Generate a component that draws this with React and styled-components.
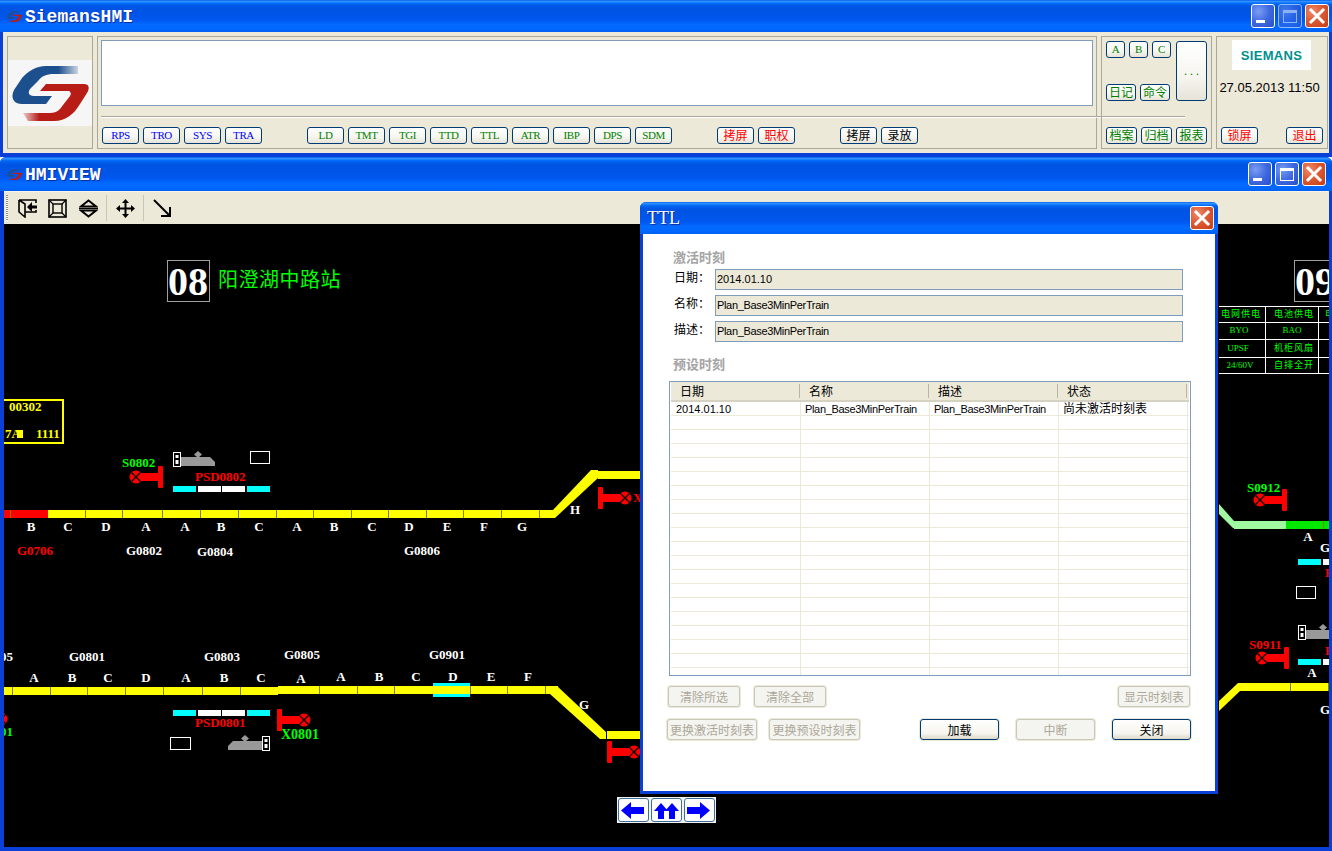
import React from 'react';
import styled, { createGlobalStyle } from 'styled-components';

const MONO = '"Liberation Mono", "Noto Sans CJK SC", monospace';
const SERIF = '"Liberation Serif", "Noto Sans CJK SC", serif';
const SANS = '"Liberation Sans", "Noto Sans CJK SC", sans-serif';
const CJK = '"Noto Sans CJK SC", "Liberation Sans", sans-serif';
const TONES = { blue: '#0000ff', green: '#008000', red: '#ff0000', black: '#000000' };
const TITLE_GRADIENT = `linear-gradient(180deg, #0058ee 0%, #3593ff 4%, #288eff 6%, #127dff 8%, #036ffc 10%,
  #0262ee 14%, #0057e5 20%, #0054e3 24%, #0055eb 56%, #005bf5 66%, #026afe 76%, #0068ff 90%, #0060f2 100%)`;

const GlobalStyle = createGlobalStyle`
  html, body {
    margin: 0;
    width: 1332px;
    height: 851px;
    overflow: hidden;
    background: #ffffff;
  }
`;

const Page = styled.div`
  display: flex;
  flex-direction: column;
  width: 1332px;
  height: 851px;
`;

const Window = styled.section`
  position: relative;
  display: flex;
  flex-direction: column;
  background: #0a3fd8;
  height: ${({ $height }) => $height}px;
  border-radius: ${({ $round }) => ($round ? '6px 6px 0 0' : '0')};
`;

const TitleBar = styled.header`
  display: flex;
  align-items: center;
  flex: none;
  height: ${({ $height }) => $height}px;
  padding: 0 ${({ $right }) => $right}px 0 6px;
  background: ${TITLE_GRADIENT};
  border-radius: inherit;
`;

const TitleText = styled.h1`
  flex: 1;
  margin: 0 0 0 2px;
  padding-top: 2px;
  color: #ffffff;
  font: bold 18px ${MONO};
  text-shadow: 1px 1px 0 #0b2f9e;
`;

const CaptionGroup = styled.div`
  display: flex;
  gap: 3px;
`;

const CaptionButton = styled.button`
  display: flex;
  align-items: center;
  justify-content: center;
  width: 24px;
  height: 24px;
  padding: 0;
  border: 1px solid #ffffff;
  border-radius: 3px;
  opacity: ${({ $disabled }) => ($disabled ? 0.55 : 1)};
  background: ${({ $close }) =>
    $close
      ? 'radial-gradient(circle at 30% 30%, #ee8a68 0%, #dc5a34 45%, #c63c12 100%)'
      : 'radial-gradient(circle at 30% 30%, #7a9df2 0%, #3f69e0 50%, #2a4fc8 100%)'};
`;

const ToolPanel = styled.div`
  display: flex;
  gap: 4px;
  height: 121px;
  margin: 0 3px;
  padding: 4px;
  box-sizing: border-box;
  background: #ece9d8;
`;

const GroupBox = styled.div`
  flex: none;
  box-sizing: border-box;
  width: ${({ $width }) => $width}px;
  height: 113px;
  border: 1px solid #aca899;
`;

const LogoGroup = styled(GroupBox)`
  display: flex;
  align-items: center;
`;

const LogoPlate = styled.div`
  display: flex;
  align-items: center;
  justify-content: center;
  width: 100%;
  height: 66px;
  background: #f6f6f6;
`;

const MainGroup = styled(GroupBox)`
  padding: 3px;
`;

const MessageBox = styled.div`
  height: 66px;
  box-sizing: border-box;
  border: 1px solid #7f9db9;
  background: #ffffff;
`;

const Separator = styled.div`
  width: 1084px;
  height: 1px;
  margin: 10px 0 10px;
  background: #aca899;
  box-shadow: 0 1px 0 #ffffff;
`;

const ButtonRow = styled.div`
  display: flex;
  margin-left: 1px;
  gap: 45px;
`;

const ButtonCluster = styled.div`
  display: flex;
  gap: 4px;
`;

const SmallButton = styled.button`
  flex: none;
  box-sizing: border-box;
  width: ${({ $width }) => $width || 37}px;
  height: ${({ $height }) => $height || 17}px;
  padding: 0;
  border: 1px solid #003c74;
  border-radius: 3px;
  background: linear-gradient(180deg, #ffffff 0%, #f6f5ef 60%, #e6e4d8 100%);
  color: ${({ $tone }) => TONES[$tone]};
  font: ${({ $latin }) => ($latin ? '11px' : '12px')}/1 ${SERIF};
  letter-spacing: ${({ $latin }) => ($latin ? '-0.4px' : '0')};
`;

const StationGroup = styled(GroupBox)`
  display: flex;
  flex-direction: column;
  padding: 4px 4px 0;
`;

const StationTop = styled.div`
  display: flex;
  justify-content: space-between;
  height: 60px;
  margin-bottom: 26px;
`;

const StationLeft = styled.div`
  display: flex;
  flex-direction: column;
  justify-content: space-between;
`;

const StationRow = styled.div`
  display: flex;
  gap: ${({ $gap }) => $gap}px;
`;

const StationBottom = styled.div`
  display: flex;
  justify-content: space-between;
`;

const ClockGroup = styled(GroupBox)`
  display: flex;
  flex-direction: column;
  align-items: center;
  padding-top: 3px;
`;

const BrandPlate = styled.div`
  display: flex;
  align-items: center;
  justify-content: center;
  width: 79px;
  height: 30px;
  margin-right: 1px;
  background: #ffffff;
  color: #008f8f;
  font: bold 13px/1 ${SANS};
  letter-spacing: 0.3px;
`;

const ClockText = styled.div`
  margin: 10px 5px 0 0;
  color: #000000;
  font: 13px/16px ${SANS};
  white-space: nowrap;
`;

const ClockButtons = styled.div`
  display: flex;
  justify-content: space-between;
  align-self: stretch;
  margin: 31px 4px 0;
`;

const Toolbar = styled.div`
  display: flex;
  align-items: center;
  flex: none;
  height: 33px;
  margin: 0 3px 0 4px;
  padding-left: 2px;
  background: #ece9d8;
  border-top: 1px solid #f6f4ea;
  box-sizing: border-box;
`;

const Grip = styled.div`
  width: 2px;
  height: 26px;
  margin-right: 10px;
  background: repeating-linear-gradient(180deg, #8f8c7c 0 1px, #ffffff 1px 2px);
`;

const ToolIcon = styled.svg`
  flex: none;
  width: 19px;
  height: 19px;
  margin-right: ${({ $gap }) => $gap}px;
`;

const ToolDivider = styled.div`
  flex: none;
  width: 1px;
  height: 26px;
  margin-right: ${({ $gap }) => $gap}px;
  background: #c9c6b4;
`;

const Canvas = styled.main`
  position: relative;
  flex: none;
  width: 1325px;
  height: 623px;
  margin: 0 3px 0 4px;
  background: #000000;
`;

const Schematic = styled.svg`
  display: block;
  width: 1325px;
  height: 623px;
`;

const MapText = styled.text`
  fill: ${({ $fill }) => $fill || '#ffffff'};
  font: bold ${({ $size }) => $size || 13}px ${SERIF};
`;

const StationNumber = styled.text`
  fill: #ffffff;
  font: bold 40px ${SERIF};
`;

const StationName = styled.text`
  fill: #00ff00;
  font: 20px ${CJK};
  letter-spacing: 0.5px;
`;

const StatusText = styled.text`
  fill: #00ff00;
  font: 9px ${SERIF};
  letter-spacing: ${({ $latin }) => ($latin ? '0' : '1px')};
  text-anchor: middle;
`;

const NavBar = styled.nav`
  position: absolute;
  left: 613px;
  top: 573px;
  display: flex;
  gap: 2px;
  padding: 1px;
  background: #f4f4ee;
`;

const NavButton = styled.button`
  display: flex;
  align-items: center;
  justify-content: center;
  width: 31px;
  height: 24px;
  padding: 0;
  border: 1px solid #3b6d9c;
  border-radius: 3px;
  background: #ffffff;
`;

const Dialog = styled.section`
  position: absolute;
  left: 640px;
  top: 45px;
  display: flex;
  flex-direction: column;
  box-sizing: border-box;
  width: 578px;
  height: 592px;
  border: 3px solid #0a3fd8;
  border-top: none;
  border-radius: 6px 6px 0 0;
  background: #ffffff;
`;

const DialogTitle = styled.header`
  display: flex;
  align-items: center;
  justify-content: space-between;
  flex: none;
  height: 32px;
  margin: 0 -3px;
  padding: 0 4px 0 7px;
  background: ${TITLE_GRADIENT};
  border-radius: 6px 6px 0 0;
  color: #ffffff;
  font: 18px "Liberation Serif", serif;
  text-shadow: 1px 1px 0 #0b2f9e;
`;

const DialogBody = styled.div`
  padding: 16px 24px 0;
`;

const SectionLabel = styled.h2`
  height: 14px;
  margin: ${({ $top }) => $top}px 0 0 6px;
  color: #a4a4a4;
  font: bold 13px/13px ${CJK};
`;

const FieldList = styled.div`
  display: flex;
  flex-direction: column;
  gap: 5px;
  margin: 5px 8px 0 7px;
`;

const FieldRow = styled.div`
  display: flex;
  align-items: center;
`;

const FieldLabel = styled.label`
  width: 41px;
  color: #000000;
  font: 12px ${CJK};
  position: relative;
  top: -3px;
`;

const FieldValue = styled.div`
  flex: 1;
  box-sizing: border-box;
  height: 21px;
  padding-left: 1px;
  border: 1px solid #7f9db9;
  background: #ece9d8;
  color: #000000;
  font: 11px/19px ${SANS};
  letter-spacing: ${({ $tight }) => ($tight ? '-0.33px' : '0')};
`;

const ListTable = styled.div`
  box-sizing: border-box;
  height: 295px;
  margin: 10px 0 0 2px;
  padding: 0 1px;
  overflow: hidden;
  border: 1px solid #7f9db9;
`;

const ListRow = styled.div`
  display: grid;
  grid-template-columns: repeat(4, 129px);
  height: ${({ $header }) => ($header ? 18 : 13)}px;
  padding-left: ${({ $header }) => ($header ? 0 : 1)}px;
  background: ${({ $header }) => ($header ? '#ece9d8' : '#ffffff')};
  border-bottom: ${({ $header }) => ($header ? '2px solid #d6d2c2' : '1px solid #ece9d8')};
`;

const HeadCell = styled.div`
  padding-left: 9px;
  margin: 2px 0;
  border-right: 1px solid #b9b6a4;
  color: #000000;
  font: 12px/14px ${CJK};
`;

const BodyCell = styled.div`
  padding-left: 4px;
  border-right: 1px solid #ece9d8;
  color: #000000;
  font: ${({ $size }) => $size || 11}px/14px ${SANS};
  letter-spacing: ${({ $tight }) => ($tight ? '-0.33px' : '0')};
  white-space: nowrap;
  overflow: hidden;
`;

const ActionRow = styled.div`
  display: flex;
  align-items: center;
  margin-top: ${({ $top }) => $top}px;
`;

const ActionButton = styled.button`
  flex: none;
  box-sizing: border-box;
  width: ${({ $width }) => $width}px;
  height: 21px;
  margin-left: ${({ $left }) => $left || 0}px;
  padding: 0;
  border: 1px solid ${({ disabled }) => (disabled ? '#c9c7ba' : '#003c74')};
  border-radius: 3px;
  box-shadow: 0 0 0 1px #ece9d8;
  background: ${({ disabled }) =>
    disabled ? '#f4f4f0' : 'linear-gradient(180deg, #ffffff 0%, #f6f5ef 70%, #dcd8c8 100%)'};
  color: ${({ disabled }) => (disabled ? '#aca899' : '#000000')};
  font: 12px ${CJK};
  white-space: nowrap;
`;

function Logo({ width, height }) {
  return (
    <svg width={width} height={height} viewBox="0 0 84 66">
      <defs>
        <linearGradient id="logoBlue" x1="0" x2="1" y1="0" y2="0">
          <stop offset="0.7" stopColor="#1c4f8d" />
          <stop offset="1" stopColor="#1c4f8d" stopOpacity="0.2" />
        </linearGradient>
        <linearGradient id="logoRed" x1="0" x2="1" y1="0" y2="0">
          <stop offset="0" stopColor="#b71c18" stopOpacity="0.2" />
          <stop offset="0.25" stopColor="#b71c18" />
        </linearGradient>
        <filter id="logoSoft">
          <feGaussianBlur stdDeviation="0.5" />
        </filter>
      </defs>
      <g filter="url(#logoSoft)">
        <path
          d="M70 6 H38 C28 6 20 11 14 18 L6 30 C2 38 6 44 14 44 H38 L44 36 H26 C20 36 20 32 22 29 L30 21 C34 16 38 14 46 14 H70 Z"
          fill="url(#logoBlue)"
        />
        <path
          d="M38 24 H76 C81 24 82 28 79 33 L72 44 C66 54 58 61 46 61 H20 L15 53 H42 C50 53 52 49 55 45 L62 36 C64 33 62 31 60 31 H32 Z"
          fill="url(#logoRed)"
        />
      </g>
    </svg>
  );
}

function CaptionGlyph({ kind }) {
  if (kind === 'min') {
    return (
      <svg width="22" height="22" viewBox="0 0 22 22">
        <rect x="4" y="15" width="9" height="3" fill="#ffffff" />
      </svg>
    );
  }
  if (kind === 'max') {
    return (
      <svg width="22" height="22" viewBox="0 0 22 22">
        <rect x="4.5" y="5.5" width="13" height="12" fill="none" stroke="#ffffff" />
        <rect x="4" y="5" width="14" height="3" fill="#ffffff" />
      </svg>
    );
  }
  return (
    <svg width="22" height="22" viewBox="0 0 22 22">
      <path d="M5 5 L17 17 M17 5 L5 17" stroke="#ffffff" strokeWidth="3" strokeLinecap="square" />
    </svg>
  );
}

function Captions({ maxDisabled }) {
  return (
    <CaptionGroup>
      <CaptionButton>
        <CaptionGlyph kind="min" />
      </CaptionButton>
      <CaptionButton $disabled={maxDisabled}>
        <CaptionGlyph kind="max" />
      </CaptionButton>
      <CaptionButton $close>
        <CaptionGlyph kind="close" />
      </CaptionButton>
    </CaptionGroup>
  );
}

const BUTTON_CLUSTERS = [
  { tone: 'blue', labels: ['RPS', 'TRO', 'SYS', 'TRA'] },
  { tone: 'green', labels: ['LD', 'TMT', 'TGI', 'TTD', 'TTL', 'ATR', 'IBP', 'DPS', 'SDM'] },
  { tone: 'red', labels: ['拷屏', '职权'] },
  { tone: 'black', labels: ['拷屏', '录放'] },
];

function PanelButton({ label, tone, ...rest }) {
  return (
    <SmallButton $tone={tone} $latin={/^[A-Z]+$/.test(label)} {...rest}>
      {label}
    </SmallButton>
  );
}

function TopWindow() {
  return (
    <Window $height={157}>
      <TitleBar $height={32} $right={3}>
        <Logo width={17} height={13} />
        <TitleText>SiemansHMI</TitleText>
        <Captions maxDisabled />
      </TitleBar>
      <ToolPanel>
        <LogoGroup $width={86}>
          <LogoPlate>
            <Logo width={84} height={66} />
          </LogoPlate>
        </LogoGroup>
        <MainGroup $width={1000}>
          <MessageBox />
          <Separator />
          <ButtonRow>
            {BUTTON_CLUSTERS.map(cluster => (
              <ButtonCluster key={cluster.tone}>
                {cluster.labels.map(label => (
                  <PanelButton key={label} label={label} tone={cluster.tone} />
                ))}
              </ButtonCluster>
            ))}
          </ButtonRow>
        </MainGroup>
        <StationGroup $width={111}>
          <StationTop>
            <StationLeft>
              <StationRow $gap={4}>
                {['A', 'B', 'C'].map(label => (
                  <PanelButton key={label} label={label} tone="green" $width={19} />
                ))}
              </StationRow>
              <StationRow $gap={4}>
                <PanelButton label="日记" tone="green" $width={30} />
                <PanelButton label="命令" tone="green" $width={30} />
              </StationRow>
            </StationLeft>
            <PanelButton label=". . ." tone="green" $width={31} $height={60} />
          </StationTop>
          <StationBottom>
            {['档案', '归档', '报表'].map(label => (
              <PanelButton key={label} label={label} tone="green" $width={31} />
            ))}
          </StationBottom>
        </StationGroup>
        <ClockGroup $width={112}>
          <BrandPlate>SIEMANS</BrandPlate>
          <ClockText>27.05.2013 11:50</ClockText>
          <ClockButtons>
            <PanelButton label="锁屏" tone="red" />
            <PanelButton label="退出" tone="red" />
          </ClockButtons>
        </ClockGroup>
      </ToolPanel>
    </Window>
  );
}

function ViewToolbar() {
  return (
    <Toolbar>
      <Grip />
      <ToolIcon viewBox="0 0 19 19" $gap={11}>
        <path d="M1 1H18V4M18 11V13H7M1 1V13L7 18V5L1 1" fill="none" stroke="#000" strokeWidth="1.6" />
        <path d="M19 6.5H14V3L9 8L14 13V9.5H19Z" fill="#000" />
      </ToolIcon>
      <ToolIcon viewBox="0 0 19 19" $gap={12}>
        <rect x="1" y="1" width="17" height="17" fill="none" stroke="#000" strokeWidth="1.6" />
        <rect x="5" y="5" width="9" height="9" fill="none" stroke="#000" strokeWidth="1.4" />
        <path d="M1 1L5 5M18 1L14 5M1 18L5 14M18 18L14 14" stroke="#000" strokeWidth="1.2" />
      </ToolIcon>
      <ToolIcon viewBox="0 0 19 19" $gap={8}>
        <path d="M9.5 1.5L17 7.5H2Z M9.5 17.5L2 11.5H17Z" fill="none" stroke="#000" strokeWidth="2" />
        <path d="M0 9.5H19" stroke="#000" strokeWidth="1.2" />
      </ToolIcon>
      <ToolDivider $gap={9} />
      <ToolIcon viewBox="0 0 19 19" $gap={8}>
        <path d="M9.5 3V16M3 9.5H16" stroke="#000" strokeWidth="2" />
        <path d="M9.5 0L13 4H6ZM9.5 19L6 15H13ZM0 9.5L4 6V13ZM19 9.5L15 13V6Z" fill="#000" />
      </ToolIcon>
      <ToolDivider $gap={9} />
      <ToolIcon viewBox="0 0 19 19" $gap={0}>
        <path d="M1 1L17 17M17 8V17H8" fill="none" stroke="#000" strokeWidth="2" />
      </ToolIcon>
    </Toolbar>
  );
}

const TRACKS = [
  { x: 4, y: 510, w: 44, fill: '#ff0000', cuts: [10] },
  { x: 48, y: 510, w: 505, fill: '#ffff00', cuts: [85, 122, 162, 200, 238, 276, 313, 351, 388, 426, 463, 501, 539] },
  { x: 598, y: 471, w: 44, fill: '#ffff00', cuts: [] },
  { x: 4, y: 687, w: 274, fill: '#ffff00', cuts: [12, 50, 87, 125, 163, 202, 240] },
  { x: 278, y: 686, w: 280, fill: '#ffff00', cuts: [319, 357, 394, 433, 470, 507, 545] },
  { x: 607, y: 731, w: 35, fill: '#ffff00', cuts: [] },
  { x: 1234, y: 521, w: 52, fill: '#a0f8a0', cuts: [] },
  { x: 1286, y: 521, w: 43, fill: '#00e800', cuts: [1323] },
  { x: 1238, y: 683, w: 91, fill: '#ffff00', cuts: [1290, 1328] },
];

const DIAGONALS = [
  { points: '553,510 591,470 598,470 598,478 555,518 546,518', fill: '#ffff00' },
  { points: '557,686 606,732 606,739 600,739 550,694 557,694', fill: '#ffff00' },
  { points: '1219,504 1234,521 1240,521 1240,528 1233,528 1219,514', fill: '#a0f8a0' },
  { points: '1219,701 1238,683 1240,691 1219,711', fill: '#ffff00' },
];

const LETTERS = [
  ['B', 31, 527], ['C', 68, 527], ['D', 106, 527], ['A', 146, 527], ['A', 185, 527], ['B', 221, 527], ['C', 259, 527],
  ['A', 297, 527], ['B', 334, 527], ['C', 372, 527], ['D', 409, 527], ['E', 447, 527], ['F', 484, 527], ['G', 522, 527],
  ['H', 575, 510], ['A', 34, 678], ['B', 72, 678], ['C', 108, 678], ['D', 146, 678], ['A', 186, 678], ['B', 224, 678],
  ['C', 261, 678], ['A', 301, 679], ['A', 341, 677], ['B', 379, 677], ['C', 416, 677], ['D', 453, 677], ['E', 491, 677],
  ['F', 528, 677], ['G', 584, 705], ['A', 1308, 537], ['A', 1312, 673],
];

const NAMES = [
  ['G0706', 17, 555, '#ff0000'], ['G0802', 126, 555], ['G0804', 197, 556], ['G0806', 404, 555],
  ['05', 0, 661], ['G0801', 69, 661], ['G0803', 204, 661], ['G0805', 284, 659], ['G0901', 429, 659],
  ['PSD0802', 195, 481, '#ff0000'], ['PSD0801', 195, 727, '#ff0000'], ['S0802', 122, 467, '#00ff00'],
  ['S0912', 1247, 492, '#00ff00'], ['S0911', 1249, 649, '#ff0000'], ['G0', 1320, 552], ['G0', 1320, 714],
  ['P', 1325, 577, '#ff0000'], ['P', 1325, 655, '#ff0000'], ['X', 633, 502, '#ff0000'], ['01', 0, 736, '#00ff00'],
];

const STATUS = [
  ['电网供电', 1241, 317, '电池供电', 1294],
  ['BYO', 1239, 333, 'BAO', 1292],
  ['UPSF', 1238, 351, '机柜风扇', 1294],
  ['24/60V', 1240, 368, '自排全开', 1294],
];

function Signal({ x, y, flip }) {
  return (
    <g transform={`translate(${x} ${y}) scale(${flip ? -1 : 1} 1)`}>
      <rect x="3" y="-4" width="20" height="8" fill="#ff0000" />
      <rect x="22" y="-11" width="5" height="22" rx="1" fill="#ff0000" />
      <circle r="6.5" fill="#ff0000" />
      <path d="M-4.5 -4.5L4.5 4.5M4.5 -4.5L-4.5 4.5" stroke="#000000" strokeWidth="1.2" />
    </g>
  );
}

function DoorBar({ x, y }) {
  return (
    <g>
      <rect x={x} y={y} width="23" height="6" fill="#00ffff" />
      <rect x={x + 25} y={y} width="23" height="6" fill="#ffffff" />
      <rect x={x + 49} y={y} width="23" height="6" fill="#ffffff" />
      <rect x={x + 74} y={y} width="23" height="6" fill="#00ffff" />
    </g>
  );
}

// gray platform wedge with its little white gate box, mirrored on the lower line
function Platform({ x, y, flip }) {
  return (
    <g transform={`translate(${x} ${y}) scale(${flip ? -1 : 1} 1)`}>
      <rect x="0.5" y="0.5" width="7" height="14" fill="#000000" stroke="#ffffff" />
      <rect x="2.5" y="3" width="3" height="3" fill="#ffffff" />
      <rect x="2.5" y="8" width="3" height="4" fill="#ffffff" />
      <path d="M8 5H37L42 10V14H8Z" fill="#999999" />
      <path d="M25 -1L29 2.5L25 6L21 2.5Z" fill="#999999" />
    </g>
  );
}

function TrackMap() {
  return (
    <Schematic viewBox="4 224 1325 623">
      <rect x="167.5" y="260.5" width="42" height="41" fill="none" stroke="#a0a0a0" />
      <StationNumber x="168" y="295">08</StationNumber>
      <StationName x="218" y="287">阳澄湖中路站</StationName>
      <rect x="1294.5" y="260.5" width="44" height="41" fill="none" stroke="#a0a0a0" />
      <StationNumber x="1295" y="295">09</StationNumber>

      <path d="M4 400H63V443H4" fill="none" stroke="#ffff00" strokeWidth="2" />
      <MapText $fill="#ffff00" x="9" y="411">00302</MapText>
      <MapText $fill="#ffff00" x="5" y="438">7A</MapText>
      <rect x="17" y="430" width="6" height="8" fill="#ffff00" />
      <MapText $fill="#ffff00" x="36" y="438">1111</MapText>

      {TRACKS.map(track => (
        <g key={`${track.x}-${track.y}`}>
          <rect x={track.x} y={track.y} width={track.w} height="8" fill={track.fill} />
          {track.cuts.map(cut => (
            <rect key={cut} x={cut} y={track.y} width="1" height="8" fill="#808000" />
          ))}
        </g>
      ))}
      {DIAGONALS.map(shape => (
        <polygon key={shape.points} points={shape.points} fill={shape.fill} />
      ))}
      <rect x="433" y="683" width="37" height="14" fill="#00ffff" />
      <rect x="433" y="686" width="37" height="8" fill="#ffff00" />

      {LETTERS.map(([label, x, y]) => (
        <MapText key={`${label}${x}`} x={x} y={y + 4} textAnchor="middle">{label}</MapText>
      ))}
      {NAMES.map(([label, x, y, fill]) => (
        <MapText key={`${label}${x}${y}`} x={x} y={y} $fill={fill}>{label}</MapText>
      ))}
      <MapText x="281" y="739" $size={14} $fill="#00ff00">X0801</MapText>

      <Signal x={136} y={477} />
      <Signal x={625} y={498} flip />
      <Signal x={304} y={720} flip />
      <Signal x={634} y={752} flip />
      <Signal x={1260} y={500} />
      <Signal x={1262} y={658} />
      <Signal x={1} y={719} flip />

      <DoorBar x={173} y={486} />
      <DoorBar x={173} y={710} />
      <DoorBar x={1298} y={559} />
      <DoorBar x={1298} y={659} />

      <Platform x={173} y={452} />
      <Platform x={270} y={736} flip />
      <Platform x={1298} y={625} />
      <rect x="250.5" y="451.5" width="19" height="12" fill="none" stroke="#ffffff" />
      <rect x="170.5" y="737.5" width="20" height="12" fill="none" stroke="#ffffff" />
      <rect x="1296.5" y="586.5" width="19" height="12" fill="none" stroke="#ffffff" />

      <path
        d="M1219 306.5H1329M1219 322.5H1329M1219 339.5H1329M1219 357.5H1329M1219 373.5H1329M1265.5 306V374M1318.5 306V374"
        stroke="#ffffff"
      />
      {STATUS.map(([left, lx, y, right, rx]) => (
        <g key={left}>
          <StatusText x={lx} y={y} $latin={/^[\w/]+$/.test(left)}>{left}</StatusText>
          <StatusText x={rx} y={y} $latin={/^[\w/]+$/.test(right)}>{right}</StatusText>
        </g>
      ))}
      <StatusText x={1330} y={317}>电</StatusText>
    </Schematic>
  );
}

const NAV_ICONS = [
  'M1 9.5L11 1V6H24V13H11V18Z',
  'M8 2L15 10H11V18H5V10H1Z M19 2L26 10H22V18H16V10H12Z',
  'M24 9.5L14 1V6H1V13H14V18Z',
];

function SectionNav() {
  return (
    <NavBar>
      {NAV_ICONS.map(path => (
        <NavButton key={path}>
          <svg width="27" height="19" viewBox="0 0 27 19">
            <path d={path} fill="#0000ff" />
          </svg>
        </NavButton>
      ))}
    </NavBar>
  );
}

const FIELDS = [
  ['日期：', '2014.01.10'],
  ['名称：', 'Plan_Base3MinPerTrain', true],
  ['描述：', 'Plan_Base3MinPerTrain', true],
];

const EMPTY_ROWS = Array.from({ length: 19 }, (_, index) => index);

function TtlDialog() {
  return (
    <Dialog>
      <DialogTitle>
        TTL
        <CaptionButton $close>
          <CaptionGlyph kind="close" />
        </CaptionButton>
      </DialogTitle>
      <DialogBody>
        <SectionLabel $top={0}>激活时刻</SectionLabel>
        <FieldList>
          {FIELDS.map(([label, value, tight]) => (
            <FieldRow key={label}>
              <FieldLabel>{label}</FieldLabel>
              <FieldValue $tight={tight}>{value}</FieldValue>
            </FieldRow>
          ))}
        </FieldList>
        <SectionLabel $top={15}>预设时刻</SectionLabel>
        <ListTable>
          <ListRow $header>
            {['日期', '名称', '描述', '状态'].map(label => (
              <HeadCell key={label}>{label}</HeadCell>
            ))}
          </ListRow>
          <ListRow>
            <BodyCell>2014.01.10</BodyCell>
            <BodyCell $tight>Plan_Base3MinPerTrain</BodyCell>
            <BodyCell $tight>Plan_Base3MinPerTrain</BodyCell>
            <BodyCell $size={12}>尚未激活时刻表</BodyCell>
          </ListRow>
          {EMPTY_ROWS.map(row => (
            <ListRow key={row}>
              <BodyCell />
              <BodyCell />
              <BodyCell />
              <BodyCell />
            </ListRow>
          ))}
        </ListTable>
        <ActionRow $top={10}>
          <ActionButton disabled $width={72} $left={1}>清除所选</ActionButton>
          <ActionButton disabled $width={72} $left={14}>清除全部</ActionButton>
          <ActionButton disabled $width={72} $left={292}>显示时刻表</ActionButton>
        </ActionRow>
        <ActionRow $top={12}>
          <ActionButton disabled $width={90}>更换激活时刻表</ActionButton>
          <ActionButton disabled $width={91} $left={12}>更换预设时刻表</ActionButton>
          <ActionButton $width={79} $left={60}>加载</ActionButton>
          <ActionButton disabled $width={79} $left={17}>中断</ActionButton>
          <ActionButton $width={79} $left={17}>关闭</ActionButton>
        </ActionRow>
      </DialogBody>
    </Dialog>
  );
}

function ViewWindow() {
  return (
    <Window $height={694} $round>
      <TitleBar $height={34} $right={6}>
        <Logo width={17} height={13} />
        <TitleText>HMIVIEW</TitleText>
        <Captions />
      </TitleBar>
      <ViewToolbar />
      <Canvas>
        <TrackMap />
        <SectionNav />
      </Canvas>
      <TtlDialog />
    </Window>
  );
}

export default function App() {
  return (
    <Page>
      <GlobalStyle />
      <TopWindow />
      <ViewWindow />
    </Page>
  );
}
